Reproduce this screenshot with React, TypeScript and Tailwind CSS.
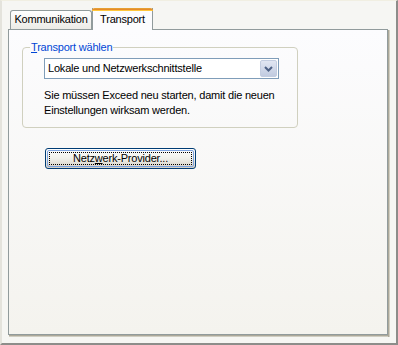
import React from "react";

export default function App() {
  const font = { fontFamily: '"Liberation Sans", Arial, sans-serif' };
  return (
    <div
      className="w-[398px] h-[345px] bg-[#f6f6f3] border-l-2 border-t border-r-2 border-b-2 border-l-[#e4e3dc] border-t-[#f1efe2] border-r-[#8d8d8a] border-b-[#8d8d8a] text-[11px] tracking-[-0.2px] text-black relative overflow-hidden"
      style={font}
    >
      <div className="pl-[6px] pt-[6px] flex flex-col">
        {/* Tabs */}
        <div className="flex items-end h-[22px] pl-[2px]">
          <div className="h-[19px] w-[82px] border border-b-0 border-[#919b9c] rounded-t-[3px] bg-gradient-to-b from-[#ffffff] to-[#ecebe6] flex items-center justify-center leading-none pb-[1px]">
            Kommunikation
          </div>
          <div className="relative z-10 h-[22px] w-[61px] -mb-px border-x border-[#919b9c] bg-[#fcfcfe] flex flex-col">
            <div className="h-[3px] -mx-px rounded-t-[3px] bg-[#e68b2c] border-t border-[#e6a034] shadow-[inset_0_-1px_0_#ffc73c]" />
            <div className="flex-1 flex items-center justify-center leading-none pb-[2px]">Transport</div>
          </div>
        </div>
        {/* Panel */}
        <div className="w-[382px] h-[308px] flex">
          <div className="flex-1 flex flex-col">
            <div className="flex-1 border border-[#919b9c] bg-gradient-to-b from-[#fcfcfe] to-[#f4f3ee] pl-[13px] pt-[17px]">
              {/* Group box */}
              <div className="relative w-[276px] h-[81px] border border-[#d0d0bf] rounded-[4px]">
                <div className="absolute -top-[8px] left-[7px] px-[1px] bg-[#fbfbfc] text-[#0046d5] leading-[14px]">
                  <span className="underline underline-offset-[1px]">T</span>ransport wählen
                </div>
                <div className="pl-[21px] pt-[10px]">
                  <div className="w-[235px] h-[21px] border border-[#7f9db9] bg-white flex items-center">
                    <div className="flex-1 pl-[3px] leading-none">Lokale und Netzwerkschnittstelle</div>
                    <div className="w-[17px] h-[17px] mr-[1px] rounded-[2px] border border-[#c3cde0] bg-gradient-to-b from-[#e1e6f2] to-[#c1cbe0] flex items-center justify-center">
                      <svg width="9" height="6" viewBox="0 0 9 6">
                        <path d="M1 1 L4.5 4.5 L8 1" stroke="#4d6185" strokeWidth="2" fill="none" />
                      </svg>
                    </div>
                  </div>
                  <div className="mt-[9px] leading-[15px]">
                    Sie müssen Exceed neu starten, damit die neuen
                    <br />
                    Einstellungen wirksam werden.
                  </div>
                </div>
              </div>
              {/* Button */}
              <div className="ml-[23px] mt-[20px] w-[151px] h-[21px] rounded-[3px] border border-[#003c74] bg-gradient-to-b from-[#ffffff] via-[#f0f0ea] to-[#d6d0c5] p-[1px]">
                <div className="w-full h-full rounded-[2px] border border-[#7ea4e0] p-[1px]">
                  <div className="w-full h-full border border-dotted border-black flex items-center justify-center leading-none">
                    Netz<span className="underline">w</span>erk-Provider...
                  </div>
                </div>
              </div>
            </div>
            <div className="h-[2px] ml-[1px] bg-[#d0cec2] border-t border-[#aca899]" />
          </div>
          <div className="w-[2px] mt-[1px] bg-[#d0cec2] border-l border-[#aca899]" />
        </div>
      </div>
    </div>
  );
}
